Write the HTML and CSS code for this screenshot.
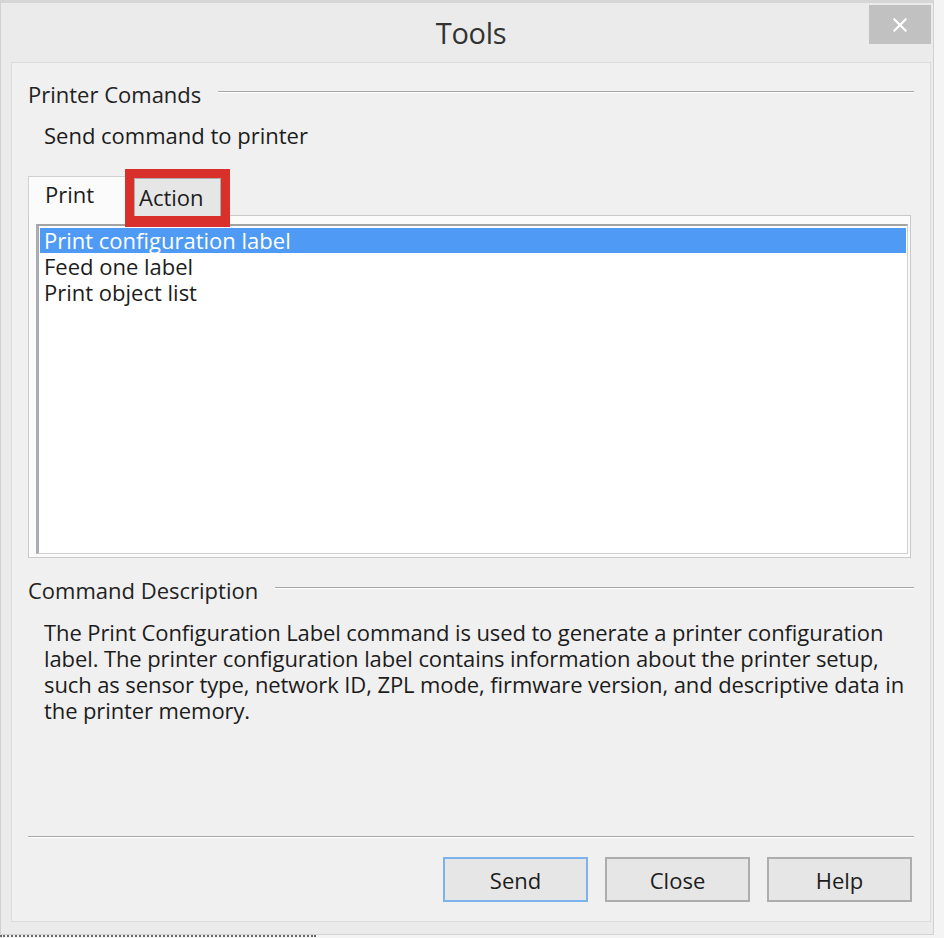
FILE: index.html
```html
<!DOCTYPE html>
<html>
<head>
<meta charset="utf-8">
<title>Tools</title>
<link rel="stylesheet" href="styles.css">
</head>
<body>
<div class="window">
  <div class="titlebar">
    <span class="title">Tools</span>
    <button class="close" aria-label="Close">
      <svg width="16" height="16" viewBox="0 0 16 16"><path d="M2.5 2.5 L13.5 13.5 M13.5 2.5 L2.5 13.5" stroke="#ffffff" stroke-width="2.2" stroke-linecap="square"/></svg>
    </button>
  </div>
  <div class="client">
    <div class="group-head">
      <span>Printer Comands</span>
      <span class="etch"></span>
    </div>
    <p class="sub">Send command to printer</p>

    <div class="tabs">
      <div class="tabstrip">
        <div class="tab active">Print</div>
        <div class="highlight"><div class="tab">Action</div></div>
      </div>
      <div class="tabpanel">
        <ul class="list">
          <li class="selected">Print configuration label</li>
          <li>Feed one label</li>
          <li>Print object list</li>
        </ul>
      </div>
    </div>

    <div class="group-head second">
      <span>Command Description</span>
      <span class="etch"></span>
    </div>
    <p class="desc">The Print Configuration Label command is used to generate a printer configuration label. The printer configuration label contains information about the printer setup, such as sensor type, network ID, ZPL mode, firmware version, and descriptive data in the printer memory.</p>

    <div class="footer">
      <div class="sep"></div>
      <div class="buttons">
        <button class="btn default">Send</button>
        <button class="btn">Close</button>
        <button class="btn">Help</button>
      </div>
    </div>
  </div>
</div>
<div class="below"></div>
</body>
</html>
```
FILE: styles.css
```css
* { box-sizing: border-box; }
html, body { margin: 0; padding: 0; }
body {
  width: 944px;
  height: 938px;
  overflow: hidden;
  background: #f4f4f4;
  font-family: "Open Sans", "Noto Sans", sans-serif;
  color: #1c1c1c;
}
.window {
  width: 934px;
  height: 935px;
  background: #ebebeb;
  border: 1px solid #d2d2d2;
  border-top: 3px solid #d6d6d6;
  padding: 0 2px 12px 10px;
  display: flex;
  flex-direction: column;
}
.titlebar {
  height: 59px;
  display: grid;
  grid-template-columns: 1fr auto 1fr;
  align-items: start;
}
.title {
  grid-column: 2;
  font-size: 29px;
  color: #333;
  margin-top: 12px;
  line-height: 36px;
  letter-spacing: -0.3px;
}
.close {
  grid-column: 3;
  justify-self: end;
  margin-top: 2px;
  width: 62px;
  height: 39px;
  border: none;
  background: #c1c1c1;
  padding: 0;
  display: flex;
  align-items: center;
  justify-content: center;
}
.client {
  flex: 1;
  background: #f0f0f0;
  border: 1px solid #dcdcdc;
  padding: 18px 16px 19px 16px;
  display: flex;
  flex-direction: column;
  font-size: 22px;
}
.group-head {
  display: flex;
  align-items: center;
  gap: 17px;
  line-height: 26px;
  color: #222;
}
.etch {
  flex: 1;
  height: 2px;
  border-top: 1px solid #a8a8a8;
  border-bottom: 1px solid #ffffff;
  margin-top: -4px;
}
.sub {
  margin: 15px 0 0 16px;
  line-height: 26px;
}
.tabs {
  margin-top: 21px;
  margin-right: 3px;
}
.tabstrip {
  display: flex;
  align-items: flex-end;
  height: 46px;
}
.tab.active {
  width: 98px;
  height: 40px;
  background: #fbfbfb;
  border: 1px solid #d0d0d0;
  border-bottom: none;
  padding: 4px 0 0 16px;
  line-height: 26px;
  margin-bottom: -1px;
  position: relative;
  z-index: 1;
}
.highlight {
  align-self: flex-start;
  border: 9px solid #d9302c;
  border-bottom-width: 11px;
  margin-left: -1px;
  width: 105px;
  height: 58px;
  position: relative;
  z-index: 2;
}
.highlight .tab {
  height: 100%;
  background: #e6e6e6;
  border: 1px solid #acacac;
  border-bottom: none;
  padding: 5px 0 0 4px;
  line-height: 26px;
}
.tabpanel {
  height: 343px;
  background: #fbfbfb;
  border: 1px solid #c9c9c9;
  padding: 8px 2px 3px 7px;
}
.list {
  list-style: none;
  margin: 0;
  height: 100%;
  background: #ffffff;
  border-top: 2px solid #a3a3a3;
  border-left: 3px solid #a9adb3;
  border-right: 1px solid #cfcfcf;
  border-bottom: 1px solid #cfcfcf;
  padding: 2px 1px 0 1px;
}
.list li {
  height: 26px;
  line-height: 26px;
  padding-left: 4px;
}
.list li.selected {
  background: #4f9af5;
  color: #ffffff;
  height: 25px;
  line-height: 25px;
}
.group-head.second {
  margin-top: 19px;
}
.desc {
  margin: 16px 0 0 16px;
  line-height: 26px;
  letter-spacing: -0.1px;
  padding-right: 0;
}
.footer {
  margin-top: auto;
}
.sep {
  height: 2px;
  border-top: 1px solid #a8a8a8;
  border-bottom: 1px solid #ffffff;
}
.buttons {
  display: flex;
  justify-content: flex-end;
  gap: 17px;
  margin-top: 19px;
  margin-right: 2px;
}
.btn {
  width: 145px;
  height: 45px;
  font-family: "Open Sans", "Noto Sans", sans-serif;
  font-size: 22px;
  color: #1c1c1c;
  background: #e6e6e6;
  border: 2px solid #adadad;
  padding: 0;
}
.btn.default {
  border-color: #7db3ec;
}
.below {
  width: 316px;
  height: 3px;
  border-top: 2px dotted #6b6b6b;
}
```
